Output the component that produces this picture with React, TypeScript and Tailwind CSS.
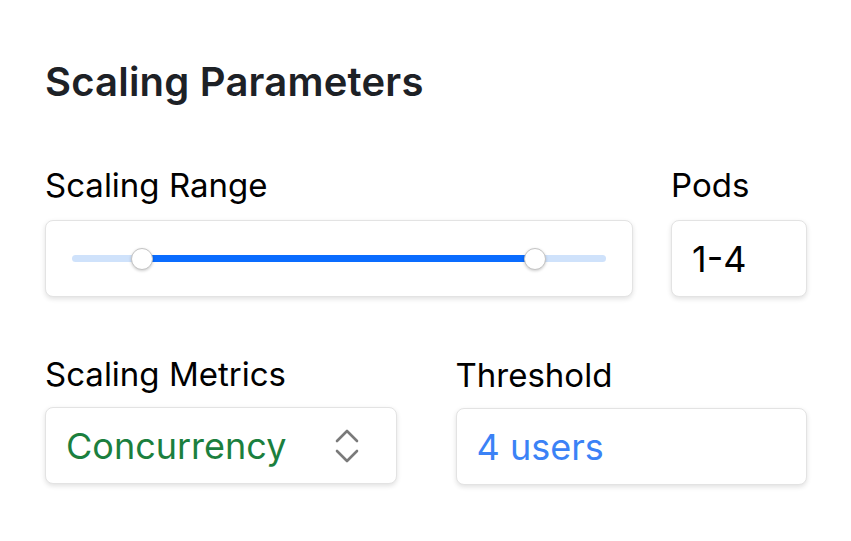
import React from 'react';

const boxCls =
  'h-[77px] rounded-lg border border-[#e3e3e3] bg-white shadow-[0_2px_5px_rgba(0,0,0,0.12)]';

const Chevrons = () => (
  <svg width="24" height="36" viewBox="0 0 24 36" fill="none" className="text-[#7a7a7a]">
    <path d="M2 13 L12 3 L22 13" stroke="currentColor" strokeWidth="2.6" strokeLinecap="round" strokeLinejoin="round" />
    <path d="M2 23 L12 33 L22 23" stroke="currentColor" strokeWidth="2.6" strokeLinecap="round" strokeLinejoin="round" />
  </svg>
);

const App = () => {
  return (
    <div className="w-[851px] h-[541px] bg-white pl-[45px] pr-[44px] pt-[58px] font-['Inter',sans-serif] text-black">
      <h1 className="text-[40px] font-semibold leading-[48px] text-[#1d2126] tracking-[0.2px]">
        Scaling Parameters
      </h1>

      <div className="mt-[59px] flex gap-[38px]">
        <div className="flex-1">
          <div className="text-[33px] leading-[40px]">Scaling Range</div>
          <div className={`${boxCls} mt-[15px] flex items-center px-[26px]`}>
            <div className="relative h-[7px] w-full rounded-full bg-[#cfe2fb]">
              <div className="absolute left-[70px] right-[71px] top-0 h-[7px] bg-[#0a6cff]" />
              <div className="absolute left-[59px] top-1/2 h-[22px] w-[22px] -translate-y-1/2 rounded-full border border-[#c4c4c4] bg-white shadow-[0_1px_3px_rgba(0,0,0,0.2)]" />
              <div className="absolute right-[60px] top-1/2 h-[22px] w-[22px] -translate-y-1/2 rounded-full border border-[#c4c4c4] bg-white shadow-[0_1px_3px_rgba(0,0,0,0.2)]" />
            </div>
          </div>
        </div>
        <div className="w-[136px]">
          <div className="text-[33px] leading-[40px]">Pods</div>
          <div className={`${boxCls} mt-[15px] flex items-center px-[20px] text-[36px]`}>1-4</div>
        </div>
      </div>

      <div className="mt-[57px] grid grid-cols-2 gap-[59px]">
        <div>
          <div className="text-[33px] leading-[40px]">Scaling Metrics</div>
          <div className={`${boxCls} mt-[13px] flex items-center justify-between pl-[20px] pr-[37px]`}>
            <span className="text-[36px] text-[#1b7f3e]">Concurrency</span>
            <Chevrons />
          </div>
        </div>
        <div>
          <div className="text-[33px] leading-[40px] mt-[1px]">Threshold</div>
          <div className={`${boxCls} mt-[13px] flex items-center px-[20px]`}>
            <span className="text-[36px] text-[#3b82f6]">4 users</span>
          </div>
        </div>
      </div>
    </div>
  );
};

export default App;
